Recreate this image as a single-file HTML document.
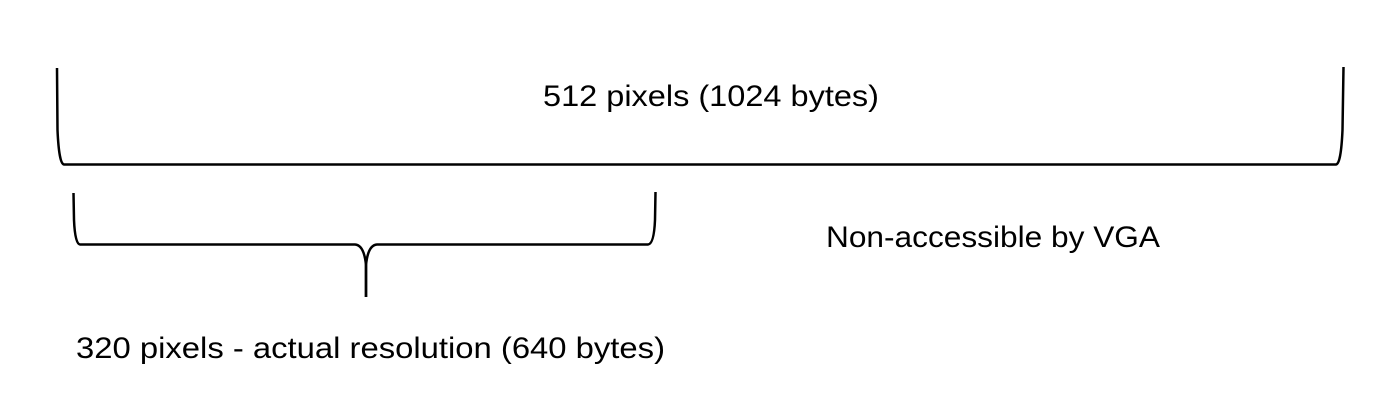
<!DOCTYPE html>
<html><head><meta charset="utf-8"><style>
html,body{margin:0;padding:0;background:#fff;width:1400px;height:412px;overflow:hidden}
svg{display:block}
text{font-family:"Liberation Sans",sans-serif;fill:#000}
</style></head><body>
<svg width="1400" height="412" viewBox="0 0 1400 412">
<g fill="none" stroke="#000" stroke-width="2.5">
<path d="M57,68 L57.5,130 Q59,164 64,164.5 L1336,164.5 Q1341,164 1342.5,130 L1343.5,67"/>
<path d="M73.5,193 L74,220 Q75,244 80,244.5 L355,244.5 Q364,245 366,265 L366,297"/>
<path d="M366,297 L366,265 Q368,245 377,244.5 L648,244.5 Q654,244 655,220 L655.5,192"/>
</g>
<text x="543" y="106" font-size="30" textLength="336" lengthAdjust="spacingAndGlyphs">512 pixels (1024 bytes)</text>
<text x="826" y="247" font-size="30" textLength="334" lengthAdjust="spacingAndGlyphs">Non-accessible by VGA</text>
<text x="76" y="358" font-size="30" textLength="589" lengthAdjust="spacingAndGlyphs">320 pixels - actual resolution (640 bytes)</text>
</svg>
</body></html>
